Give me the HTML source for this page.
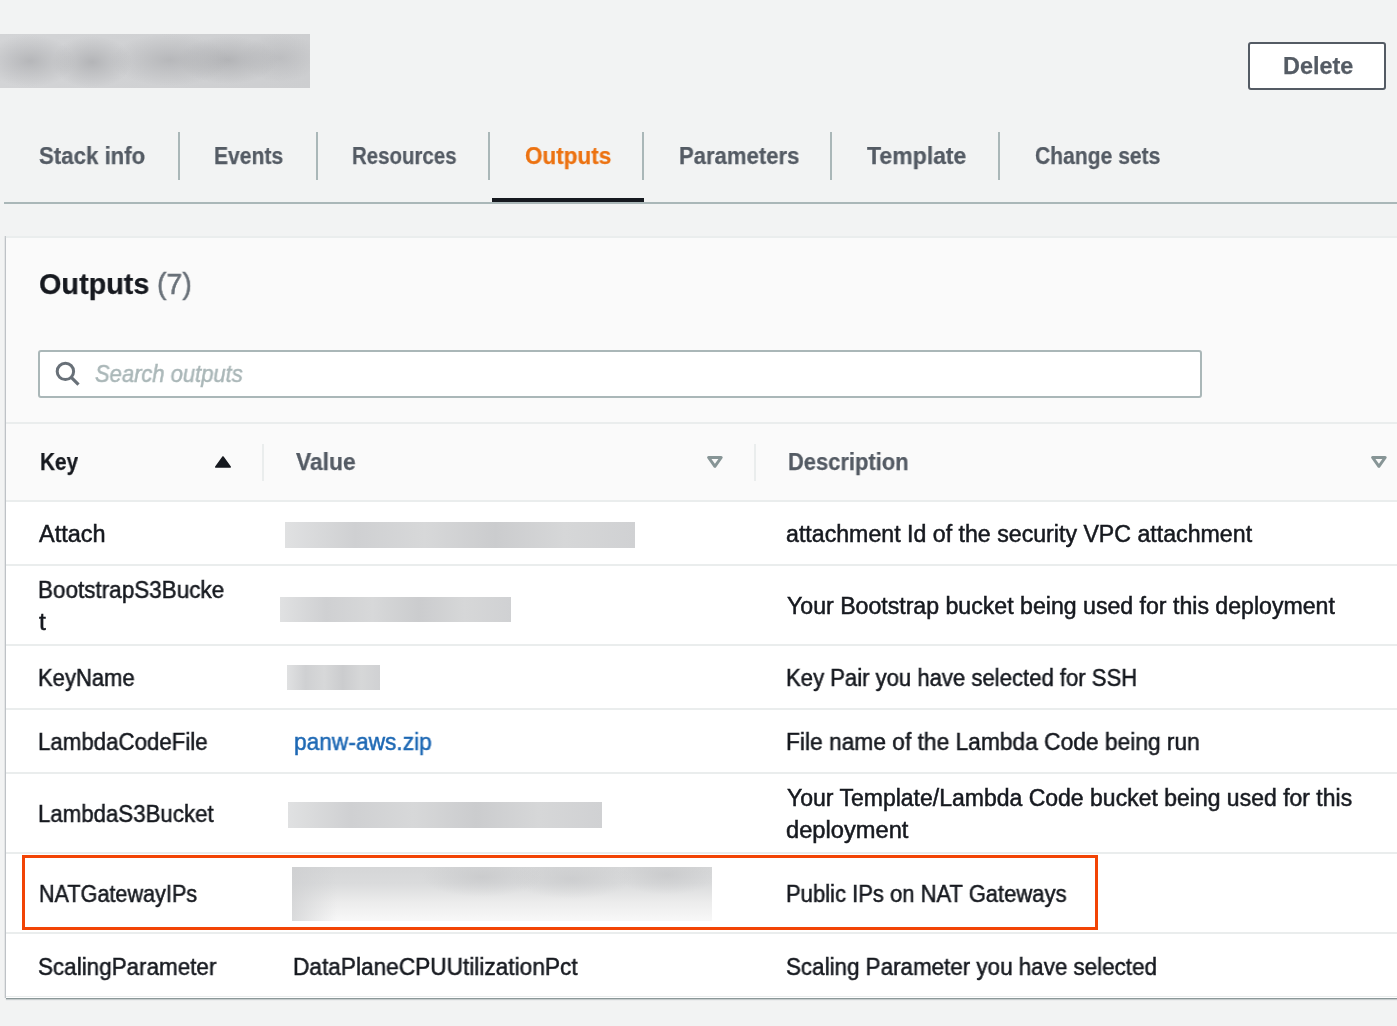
<!DOCTYPE html>
<html>
<head>
<meta charset="utf-8">
<style>
html,body{margin:0;padding:0;}
body{width:1397px;height:1026px;overflow:hidden;background:#f2f3f3;position:relative;font-family:"Liberation Sans",sans-serif;color:#16191f;}
.abs{position:absolute;}
.tx{position:absolute;line-height:40px;white-space:nowrap;transform-origin:0 0;font-family:"Liberation Sans",sans-serif;will-change:transform;-webkit-text-stroke:0.25px currentColor;}
.title-blur{left:0;top:34px;width:310px;height:54px;
 background:
 radial-gradient(ellipse 45px 26px at 30px 27px, rgba(172,173,176,0.75), rgba(172,173,176,0) 100%),
 radial-gradient(ellipse 40px 26px at 92px 28px, rgba(172,173,176,0.8), rgba(172,173,176,0) 100%),
 radial-gradient(ellipse 60px 26px at 170px 26px, rgba(172,173,176,0.7), rgba(172,173,176,0) 100%),
 radial-gradient(ellipse 50px 24px at 228px 26px, rgba(172,173,176,0.8), rgba(172,173,176,0) 100%),
 radial-gradient(ellipse 40px 24px at 280px 24px, rgba(172,173,176,0.5), rgba(172,173,176,0) 100%),
 linear-gradient(90deg,#d3d4d6,#cdced0);}
.btn{left:1248px;top:42px;width:134px;height:44px;border:2px solid #545b64;border-radius:3px;background:#fff;}
.sep{top:132px;width:2px;height:48px;background:#aab7b8;}
.tabline{left:4px;top:202px;width:1393px;height:2px;background:#aab7b8;}
.active{left:492px;top:198px;width:152px;height:4px;background:#16191f;}
.panel{left:6px;top:236px;width:1400px;height:760px;background:#fafafa;border-top:2px solid #eaeded;box-shadow:0 1px 0 0 #8a9798,0 2px 1px 0 rgba(0,28,36,.18),-1px 0 0 0 #c4c8cb,-2px 0 0 0 #e3e5e6;}
.search{left:38px;top:350px;width:1160px;height:44px;border:2px solid #aab7b8;border-radius:3px;background:#fff;}
.hline{height:2px;background:#eaeded;width:1400px;left:6px;}
.csep{top:444px;width:2px;height:37px;background:#eaeded;}
.rows{left:6px;top:502px;width:1400px;height:496px;background:#fff;}
.blur{background:linear-gradient(90deg,#e0e1e2,#cfd0d2 20%,#d7d8d9 40%,#cbccce 60%,#d6d7d8 80%,#d0d1d3);}
.blur2{background:radial-gradient(ellipse 60px 20px at 190px 10px, rgba(190,191,193,0.5), rgba(190,191,193,0)),radial-gradient(ellipse 60px 20px at 280px 12px, rgba(190,191,193,0.45), rgba(190,191,193,0)),radial-gradient(ellipse 50px 20px at 375px 8px, rgba(190,191,193,0.5), rgba(190,191,193,0)),linear-gradient(90deg, rgba(205,206,208,0.7) 0, rgba(205,206,208,0) 45px),linear-gradient(180deg,#d5d6d7 0%,#dadbdc 30%,#ececec 65%,#f8f8f8 100%);}
.redbox{left:22px;top:855px;width:1070px;height:69px;border:3px solid #f24405;}
</style>
</head>
<body>
<div class="abs title-blur"></div>
<div class="abs btn"></div>

<div class="abs sep" style="left:178px"></div>
<div class="abs sep" style="left:316px"></div>
<div class="abs sep" style="left:488px"></div>
<div class="abs sep" style="left:642px"></div>
<div class="abs sep" style="left:830px"></div>
<div class="abs sep" style="left:998px"></div>
<div class="abs tabline"></div>
<div class="abs active"></div>

<div class="abs panel"></div>
<div class="abs search"></div>
<svg class="abs" style="left:48px;top:355px" width="40" height="37" viewBox="0 0 40 37">
 <circle cx="17.4" cy="16.4" r="8.2" fill="none" stroke="#687078" stroke-width="3"/>
 <line x1="23" y1="22.2" x2="30.5" y2="29.6" stroke="#687078" stroke-width="3.2"/>
</svg>

<div class="abs hline" style="top:422px"></div>
<svg class="abs" style="left:205px;top:448px" width="35" height="28" viewBox="205 448 35 28">
 <polygon points="223,457 215.8,467 230.2,467" fill="#16191f" stroke="#16191f" stroke-width="1.6" stroke-linejoin="round"/>
</svg>
<div class="abs csep" style="left:262px"></div>
<svg class="abs" style="left:700px;top:448px" width="30" height="28" viewBox="700 448 30 28">
 <polygon points="708.6,457.5 721.2,457.5 714.9,466.3" fill="none" stroke="#879596" stroke-width="3" stroke-linejoin="round"/>
</svg>
<div class="abs csep" style="left:754px"></div>
<svg class="abs" style="left:1364px;top:448px" width="30" height="28" viewBox="700 448 30 28">
 <polygon points="708.6,457.5 721.2,457.5 714.9,466.3" fill="none" stroke="#879596" stroke-width="3" stroke-linejoin="round"/>
</svg>

<div class="abs rows"></div>
<div class="abs hline" style="top:500px"></div>
<div class="abs hline" style="top:564px"></div>
<div class="abs hline" style="top:644px"></div>
<div class="abs hline" style="top:708px"></div>
<div class="abs hline" style="top:772px"></div>
<div class="abs hline" style="top:852px"></div>
<div class="abs hline" style="top:932px"></div>
<div class="abs hline" style="top:996px;height:1px"></div>

<div class="abs blur" style="left:285px;top:522px;width:350px;height:26px"></div>
<div class="abs blur" style="left:280px;top:597px;width:231px;height:25px"></div>
<div class="abs blur" style="left:287px;top:665px;width:93px;height:25px"></div>
<div class="abs blur" style="left:288px;top:802px;width:314px;height:26px"></div>
<div class="abs blur2" style="left:292px;top:867px;width:420px;height:54px"></div>

<div class="tx" style="left:39.05px;top:136.00px;font-size:23.3px;font-weight:700;font-style:normal;color:#545b64;transform:scaleX(0.9545)">Stack info</div>
<div class="tx" style="left:214.40px;top:136.00px;font-size:23.3px;font-weight:700;font-style:normal;color:#545b64;transform:scaleX(0.9040)">Events</div>
<div class="tx" style="left:351.62px;top:136.00px;font-size:23.3px;font-weight:700;font-style:normal;color:#545b64;transform:scaleX(0.8771)">Resources</div>
<div class="tx" style="left:524.53px;top:136.00px;font-size:23.3px;font-weight:700;font-style:normal;color:#ec7211;transform:scaleX(0.9670)">Outputs</div>
<div class="tx" style="left:679.05px;top:136.00px;font-size:23.3px;font-weight:700;font-style:normal;color:#545b64;transform:scaleX(0.9480)">Parameters</div>
<div class="tx" style="left:867.00px;top:136.00px;font-size:23.3px;font-weight:700;font-style:normal;color:#545b64;transform:scaleX(0.9880)">Template</div>
<div class="tx" style="left:1035.09px;top:136.00px;font-size:23.3px;font-weight:700;font-style:normal;color:#545b64;transform:scaleX(0.9051)">Change sets</div>
<div class="tx" style="left:1282.59px;top:46.20px;font-size:23.3px;font-weight:700;font-style:normal;color:#545b64;transform:scaleX(1.0059)">Delete</div>
<div class="tx" style="left:38.54px;top:264.00px;font-size:30px;font-weight:700;font-style:normal;color:#16191f;transform:scaleX(0.9602)">Outputs</div>
<div class="tx" style="left:156.85px;top:264.00px;font-size:30px;font-weight:400;font-style:normal;color:#687078;transform:scaleX(0.9471);-webkit-text-stroke:0.5px currentColor">(7)</div>
<div class="tx" style="left:94.70px;top:353.50px;font-size:23px;font-weight:400;font-style:italic;color:#aab7b8;transform:scaleX(0.9548);-webkit-text-stroke:0.5px currentColor">Search outputs</div>
<div class="tx" style="left:40.01px;top:441.60px;font-size:23.3px;font-weight:700;font-style:normal;color:#16191f;transform:scaleX(0.8929)">Key</div>
<div class="tx" style="left:296.00px;top:442.30px;font-size:23.3px;font-weight:700;font-style:normal;color:#545b64;transform:scaleX(0.9783)">Value</div>
<div class="tx" style="left:787.96px;top:442.30px;font-size:23.3px;font-weight:700;font-style:normal;color:#545b64;transform:scaleX(0.9405)">Description</div>
<div class="tx" style="left:39.00px;top:513.70px;font-size:23px;font-weight:400;font-style:normal;color:#16191f;transform:scaleX(1.0219);-webkit-text-stroke:0.5px currentColor">Attach</div>
<div class="tx" style="left:38.02px;top:569.70px;font-size:23px;font-weight:400;font-style:normal;color:#16191f;transform:scaleX(0.9772);-webkit-text-stroke:0.5px currentColor">BootstrapS3Bucke</div>
<div class="tx" style="left:39.00px;top:601.50px;font-size:23px;font-weight:400;font-style:normal;color:#16191f;transform:scaleX(1.0714);-webkit-text-stroke:0.5px currentColor">t</div>
<div class="tx" style="left:38.24px;top:657.90px;font-size:23px;font-weight:400;font-style:normal;color:#16191f;transform:scaleX(0.9566);-webkit-text-stroke:0.5px currentColor">KeyName</div>
<div class="tx" style="left:38.03px;top:721.70px;font-size:23px;font-weight:400;font-style:normal;color:#16191f;transform:scaleX(0.9688);-webkit-text-stroke:0.5px currentColor">LambdaCodeFile</div>
<div class="tx" style="left:38.03px;top:793.50px;font-size:23px;font-weight:400;font-style:normal;color:#16191f;transform:scaleX(0.9669);-webkit-text-stroke:0.5px currentColor">LambdaS3Bucket</div>
<div class="tx" style="left:38.76px;top:874.00px;font-size:23px;font-weight:400;font-style:normal;color:#16191f;transform:scaleX(0.9395);-webkit-text-stroke:0.5px currentColor">NATGatewayIPs</div>
<div class="tx" style="left:38.02px;top:946.50px;font-size:23px;font-weight:400;font-style:normal;color:#16191f;transform:scaleX(0.9758);-webkit-text-stroke:0.5px currentColor">ScalingParameter</div>
<div class="tx" style="left:293.61px;top:721.70px;font-size:23px;font-weight:400;font-style:normal;color:#1d68b4;transform:scaleX(0.9884);-webkit-text-stroke:0.5px currentColor">panw-aws.zip</div>
<div class="tx" style="left:293.21px;top:946.50px;font-size:23px;font-weight:400;font-style:normal;color:#16191f;transform:scaleX(0.9851);-webkit-text-stroke:0.5px currentColor">DataPlaneCPUUtilizationPct</div>
<div class="tx" style="left:785.69px;top:513.70px;font-size:23px;font-weight:400;font-style:normal;color:#16191f;transform:scaleX(1.0071);-webkit-text-stroke:0.5px currentColor">attachment Id of the security VPC attachment</div>
<div class="tx" style="left:787.10px;top:586.20px;font-size:23px;font-weight:400;font-style:normal;color:#16191f;transform:scaleX(1.0051);-webkit-text-stroke:0.5px currentColor">Your Bootstrap bucket being used for this deployment</div>
<div class="tx" style="left:786.04px;top:657.90px;font-size:23px;font-weight:400;font-style:normal;color:#16191f;transform:scaleX(0.9606);-webkit-text-stroke:0.5px currentColor">Key Pair you have selected for SSH</div>
<div class="tx" style="left:786.01px;top:721.70px;font-size:23px;font-weight:400;font-style:normal;color:#16191f;transform:scaleX(0.9897);-webkit-text-stroke:0.5px currentColor">File name of the Lambda Code being run</div>
<div class="tx" style="left:787.10px;top:777.70px;font-size:23px;font-weight:400;font-style:normal;color:#16191f;transform:scaleX(0.9998);-webkit-text-stroke:0.5px currentColor">Your Template/Lambda Code bucket being used for this</div>
<div class="tx" style="left:785.77px;top:809.80px;font-size:23px;font-weight:400;font-style:normal;color:#16191f;transform:scaleX(1.0297);-webkit-text-stroke:0.5px currentColor">deployment</div>
<div class="tx" style="left:786.04px;top:874.00px;font-size:23px;font-weight:400;font-style:normal;color:#16191f;transform:scaleX(0.9568);-webkit-text-stroke:0.5px currentColor">Public IPs on NAT Gateways</div>
<div class="tx" style="left:786.03px;top:946.50px;font-size:23px;font-weight:400;font-style:normal;color:#16191f;transform:scaleX(0.9736);-webkit-text-stroke:0.5px currentColor">Scaling Parameter you have selected</div>

<div class="abs redbox"></div>
</body>
</html>
